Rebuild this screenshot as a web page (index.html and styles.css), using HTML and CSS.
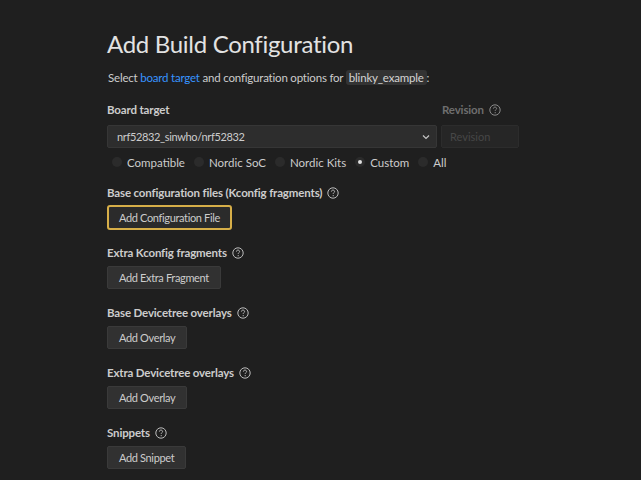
FILE: index.html
```html
<!DOCTYPE html>
<html>
<head>
<meta charset="utf-8">
<link rel="stylesheet" href="styles.css">
</head>
<body>
<div class="page">
  <h1 class="title">Add Build Configuration</h1>
  <p class="intro">Select <a class="link">board target</a> and configuration options for <span class="chip">blinky_example</span>:</p>

  <div class="board-row">
    <div class="board-col">
      <div class="label">Board target</div>
      <div class="select">
        <span>nrf52832_sinwho/nrf52832</span>
        <svg class="chev" width="10" height="10" viewBox="0 0 10 10"><path d="M2 3.5 L5 6.5 L8 3.5" fill="none" stroke="#c5c5c5" stroke-width="1.2"/></svg>
      </div>
    </div>
    <div class="rev-col">
      <div class="label disabled">Revision <svg class="help" width="12" height="12" viewBox="0 0 12 12"><circle cx="6" cy="6" r="5.2" fill="none" stroke="currentColor" stroke-width="1"/><path d="M4.4 4.6 C4.4 3.6 5.1 3.1 6 3.1 C6.9 3.1 7.6 3.7 7.6 4.5 C7.6 5.5 6.2 5.6 6.2 6.9" fill="none" stroke="currentColor" stroke-width="1"/><circle cx="6.2" cy="8.7" r="0.6" fill="currentColor"/></svg></div>
      <div class="rev-input">Revision</div>
    </div>
  </div>

  <div class="radios">
    <label class="radio"><span class="dot"></span>Compatible</label>
    <label class="radio"><span class="dot"></span>Nordic SoC</label>
    <label class="radio"><span class="dot"></span>Nordic Kits</label>
    <label class="radio"><span class="dot on"></span>Custom</label>
    <label class="radio"><span class="dot"></span>All</label>
  </div>

  <div class="section">
    <div class="label">Base configuration files (Kconfig fragments) <svg class="help" width="12" height="12" viewBox="0 0 12 12"><circle cx="6" cy="6" r="5.2" fill="none" stroke="currentColor" stroke-width="1"/><path d="M4.4 4.6 C4.4 3.6 5.1 3.1 6 3.1 C6.9 3.1 7.6 3.7 7.6 4.5 C7.6 5.5 6.2 5.6 6.2 6.9" fill="none" stroke="currentColor" stroke-width="1"/><circle cx="6.2" cy="8.7" r="0.6" fill="currentColor"/></svg></div>
    <button class="btn focus">Add Configuration File</button>
  </div>

  <div class="section">
    <div class="label">Extra Kconfig fragments <svg class="help" width="12" height="12" viewBox="0 0 12 12"><circle cx="6" cy="6" r="5.2" fill="none" stroke="currentColor" stroke-width="1"/><path d="M4.4 4.6 C4.4 3.6 5.1 3.1 6 3.1 C6.9 3.1 7.6 3.7 7.6 4.5 C7.6 5.5 6.2 5.6 6.2 6.9" fill="none" stroke="currentColor" stroke-width="1"/><circle cx="6.2" cy="8.7" r="0.6" fill="currentColor"/></svg></div>
    <button class="btn">Add Extra Fragment</button>
  </div>

  <div class="section">
    <div class="label">Base Devicetree overlays <svg class="help" width="12" height="12" viewBox="0 0 12 12"><circle cx="6" cy="6" r="5.2" fill="none" stroke="currentColor" stroke-width="1"/><path d="M4.4 4.6 C4.4 3.6 5.1 3.1 6 3.1 C6.9 3.1 7.6 3.7 7.6 4.5 C7.6 5.5 6.2 5.6 6.2 6.9" fill="none" stroke="currentColor" stroke-width="1"/><circle cx="6.2" cy="8.7" r="0.6" fill="currentColor"/></svg></div>
    <button class="btn">Add Overlay</button>
  </div>

  <div class="section">
    <div class="label">Extra Devicetree overlays <svg class="help" width="12" height="12" viewBox="0 0 12 12"><circle cx="6" cy="6" r="5.2" fill="none" stroke="currentColor" stroke-width="1"/><path d="M4.4 4.6 C4.4 3.6 5.1 3.1 6 3.1 C6.9 3.1 7.6 3.7 7.6 4.5 C7.6 5.5 6.2 5.6 6.2 6.9" fill="none" stroke="currentColor" stroke-width="1"/><circle cx="6.2" cy="8.7" r="0.6" fill="currentColor"/></svg></div>
    <button class="btn">Add Overlay</button>
  </div>

  <div class="section">
    <div class="label">Snippets <svg class="help" width="12" height="12" viewBox="0 0 12 12"><circle cx="6" cy="6" r="5.2" fill="none" stroke="currentColor" stroke-width="1"/><path d="M4.4 4.6 C4.4 3.6 5.1 3.1 6 3.1 C6.9 3.1 7.6 3.7 7.6 4.5 C7.6 5.5 6.2 5.6 6.2 6.9" fill="none" stroke="currentColor" stroke-width="1"/><circle cx="6.2" cy="8.7" r="0.6" fill="currentColor"/></svg></div>
    <button class="btn">Add Snippet</button>
  </div>
</div>
</body>
</html>
```

FILE: styles.css
```css
html, body {
  margin: 0;
  padding: 0;
  background: #1f1f1f;
  height: 100%;
  overflow: hidden;
}
body {
  font-family: Lato, "Open Sans", sans-serif;
  font-size: 11.5px;
  color: #cccccc;
}
.page {
  padding: 28px 0 0 107px;
}
.title {
  margin: 0;
  font-size: 24px;
  font-weight: 400;
  color: #e2e2e2;
  line-height: 32px;
  letter-spacing: -0.3px;
}
.intro {
  margin: 9px 0 0 1px;
  line-height: 18px;
  font-size: 11.5px;
  letter-spacing: -0.2px;
}
.link { color: #3794ff; }
.chip {
  background: #333333;
  border-radius: 3px;
  padding: 1px 3px;
  color: #d4d4d4;
}
.board-row {
  display: flex;
  gap: 4px;
  margin-top: 14px;
}
.label {
  display: flex;
  align-items: center;
  gap: 5px;
  font-weight: 700;
  line-height: 18px;
  letter-spacing: -0.15px;
  color: #cccccc;
}
.label.disabled { color: #6e6e6e; }
.help { color: #bbbbbb; }
.label.disabled .help { color: #8a8a8a; }
.select {
  margin-top: 6px;
  width: 330px;
  height: 23px;
  box-sizing: border-box;
  background: #2d2d2d;
  border: 1px solid #363636;
  border-radius: 2px;
  display: flex;
  align-items: center;
  justify-content: space-between;
  padding: 0 4px 0 9px;
  font-size: 11px;
  letter-spacing: -0.35px;
}
.chev { margin-right: 1px; }
.rev-col .label { padding-left: 1px; }
.rev-input {
  margin-top: 6px;
  width: 78px;
  height: 23px;
  box-sizing: border-box;
  background: #262626;
  border: 1px solid #2c2c2c;
  border-radius: 2px;
  color: #474747;
  padding: 0 8px;
  line-height: 21px;
  font-size: 11px;
}
.radios {
  display: flex;
  margin-top: 4px;
  height: 20px;
  align-items: center;
}
.radio {
  display: flex;
  align-items: center;
  margin-right: 4px;
  padding-left: 5px;
}
.dot {
  width: 10px;
  height: 10px;
  border-radius: 50%;
  background: #2b2b2b;
  margin-right: 5px;
  position: relative;
}
.dot.on::after {
  content: "";
  position: absolute;
  left: 3px;
  top: 3px;
  width: 4px;
  height: 4px;
  border-radius: 50%;
  background: #e0e0e0;
}
.section {
  margin-top: 11px;
  height: 49px;
}
.radios + .section { margin-top: 12px; }
.btn {
  margin-top: 4px;
  display: block;
  font-family: inherit;
  font-size: 11px;
  letter-spacing: -0.35px;
  color: #cccccc;
  background: #313131;
  border: 1px solid #3a3a3a;
  border-radius: 2px;
  height: 23px;
  padding: 0 11px;
  cursor: pointer;
}
.btn.focus {
  border: 2px solid #d6ae48;
  padding: 0 10px;
  height: 25px;
  margin-top: 3px;
  background: #2b2b2b;
  border-radius: 3px;
}
```
